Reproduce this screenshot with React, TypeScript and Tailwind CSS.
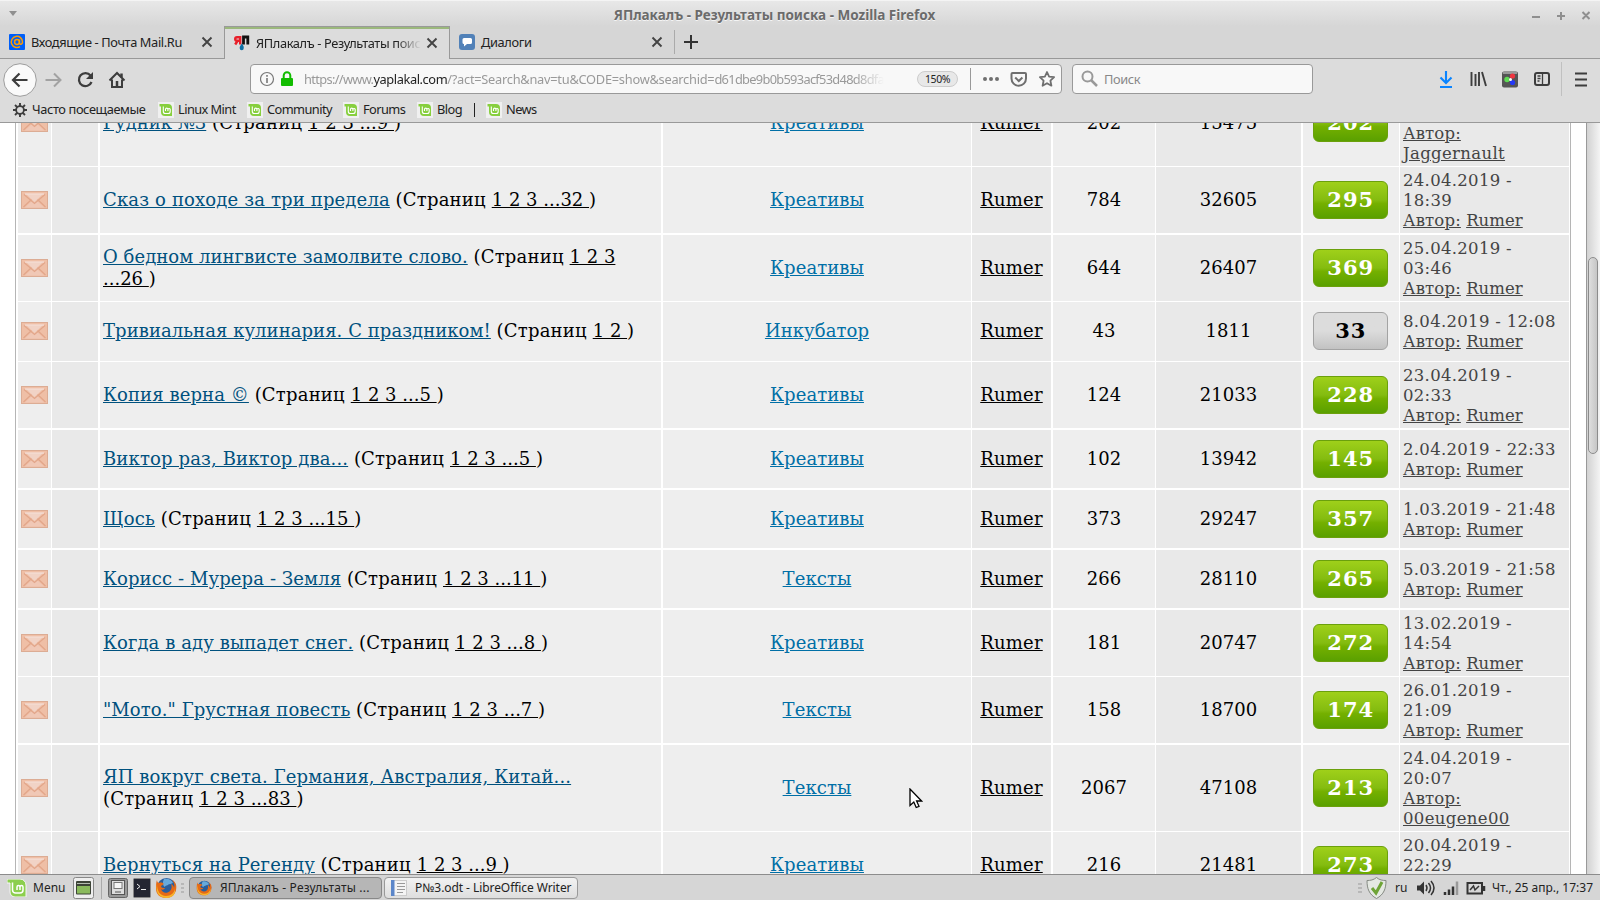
import { ReactNode } from 'react';
import { clsx } from 'clsx';

interface Topic {
  title: string;
  titleSpacing: string;
  pages: string;
  pagesTail?: string;
  breakBefore?: boolean;
  forum: string;
  replies: string;
  views: string;
  rating: string;
  date: string[];
  author: string;
  wrapAuthor?: boolean;
  size: string;
}

const topics: Topic[] = [
  { title: 'Рудник №3', titleSpacing: 'tracking-normal', pages: '1 2 3 ...9 ', forum: 'Креативы', replies: '202', views: '15475', rating: '202', date: ['25.04.2019 -', '10:12'], author: 'Jaggernault', wrapAuthor: true, size: 'h-[87px] border-b -mt-[43px]' },
  { title: 'Сказ о походе за три предела', titleSpacing: 'tracking-[0.15px]', pages: '1 2 3 ...32 ', forum: 'Креативы', replies: '784', views: '32605', rating: '295', date: ['24.04.2019 -', '18:39'], author: 'Rumer', size: 'h-[68px] border-b-2' },
  { title: 'О бедном лингвисте замолвите слово.', titleSpacing: 'tracking-[0.04px]', pages: '1 2 3', pagesTail: '...26 ', forum: 'Креативы', replies: '644', views: '26407', rating: '369', date: ['25.04.2019 -', '03:46'], author: 'Rumer', size: 'h-[67px] border-b' },
  { title: 'Тривиальная кулинария. С праздником!', titleSpacing: 'tracking-[0.06px]', pages: '1 2 ', forum: 'Инкубатор', replies: '43', views: '1811', rating: '33', date: ['8.04.2019 - 12:08'], author: 'Rumer', size: 'h-[60px] border-b *:pb-px' },
  { title: 'Копия верна ©', titleSpacing: 'tracking-[0.1px]', pages: '1 2 3 ...5 ', forum: 'Креативы', replies: '124', views: '21033', rating: '228', date: ['23.04.2019 -', '02:33'], author: 'Rumer', size: 'h-[68px] border-b-2' },
  { title: 'Виктор раз, Виктор два...', titleSpacing: 'tracking-[0.14px]', pages: '1 2 3 ...5 ', forum: 'Креативы', replies: '102', views: '13942', rating: '145', date: ['2.04.2019 - 22:33'], author: 'Rumer', size: 'h-[60px] border-b-2' },
  { title: 'Щось', titleSpacing: 'tracking-[0.2px]', pages: '1 2 3 ...15 ', forum: 'Креативы', replies: '373', views: '29247', rating: '357', date: ['1.03.2019 - 21:48'], author: 'Rumer', size: 'h-[60px] border-b-2' },
  { title: 'Корисс - Мурера - Земля', titleSpacing: 'tracking-[0.11px]', pages: '1 2 3 ...11 ', forum: 'Тексты', replies: '266', views: '28110', rating: '265', date: ['5.03.2019 - 21:58'], author: 'Rumer', size: 'h-[60px] border-b-2' },
  { title: 'Когда в аду выпадет снег.', titleSpacing: 'tracking-[0.08px]', pages: '1 2 3 ...8 ', forum: 'Креативы', replies: '181', views: '20747', rating: '272', date: ['13.02.2019 -', '14:54'], author: 'Rumer', size: 'h-[67px] border-b' },
  { title: '"Мото." Грустная повесть', titleSpacing: 'tracking-[0.08px]', pages: '1 2 3 ...7 ', forum: 'Тексты', replies: '158', views: '18700', rating: '174', date: ['26.01.2019 -', '21:09'], author: 'Rumer', size: 'h-[68px] border-b-2' },
  { title: 'ЯП вокруг света. Германия, Австралия, Китай...', titleSpacing: 'tracking-[0.13px]', pages: '1 2 3 ...83 ', breakBefore: true, forum: 'Тексты', replies: '2067', views: '47108', rating: '213', date: ['24.04.2019 -', '20:07'], author: '00eugene00', wrapAuthor: true, size: 'h-[87px] border-b' },
  { title: 'Вернуться на Регенду', titleSpacing: 'tracking-[0.1px]', pages: '1 2 3 ...9 ', forum: 'Креативы', replies: '216', views: '21481', rating: '273', date: ['20.04.2019 -', '22:29'], author: 'Rumer', size: 'h-[67px] border-b' },
];

function Envelope() {
  return (
    <svg width="27" height="18" viewBox="0 0 27 18" fill="none">
      <rect x="0.5" y="0.5" width="26" height="17" fill="#efbfa6" stroke="#dcac94" />
      <path d="M2.500 16 10.500 8.500M24.500 16 16.500 8.500" stroke="#e2a68a" strokeWidth="1.200" />
      <path d="M4 16.500 11 10l2.500 2.500L16 10l7 6.500z" fill="#f0c8b6" />
      <path d="M3 3.500 13.500 12.500 24 3.500" stroke="#e2a68a" strokeWidth="1.200" />
      <path d="M5 3h17l-8.500 8z" fill="#f1d3c6" />
      <path d="M4 3h19" stroke="#f4ded4" strokeWidth="1.300" />
    </svg>
  );
}

function CloseIcon() {
  return (
    <svg width="12" height="12" viewBox="0 0 12 12" stroke="#444" strokeWidth="1.9" className="shrink-0">
      <path d="M1.500 1.500l9 9M10.500 1.500l-9 9" />
    </svg>
  );
}

function MintIcon() {
  return (
    <svg width="16" height="16" viewBox="0 0 16 16" fill="none" className="shrink-0">
      <rect width="16" height="16" fill="#f0f0f0" />
      <path d="M1.500 2h8.500a4 4 0 0 1 4 4v8H7a4 4 0 0 1-4-4V4.500H1.500z" fill="#87cf3e" />
      <path d="M5.300 4.500v5a2 2 0 0 0 2 2h2.900a2 2 0 0 0 2-2V7.300a1.200 1.200 0 0 0-2.300 0V9M9.900 7.300a1.200 1.200 0 0 0-2.400 0V9" stroke="#fff" strokeWidth="1.100" />
    </svg>
  );
}

function FirefoxIcon({ size }: { size: number }) {
  return (
    <svg width={size} height={size} viewBox="0 0 22 22" className="shrink-0">
      <circle cx="11.500" cy="10.500" r="9.500" fill="#2a5d9c" />
      <path d="M9 2c4-1 8 1 9 4-2 0-2 2-4 1-1 2-4 1-4 3-2-1-3-4-1-8z" fill="#67a9dc" />
      <path d="M2 3c0 2 1 3 2 3 2-1 4 0 5 1-1 1-3 1-3 3 1 1 3 1 4 1-1 2-3 2-4 1 1 4 6 5 9 2 2-2 2-5 1-7 2 1 3 2 3 4 1-3 0-6-2-8 4 2 5 6 4 10-1 5-5 8-10 8C5 21 1 17 1 12c0-4 0-6 1-9z" fill="#e66a16" />
      <path d="M2 7c0 7 3 12 9 12 5 0 8-3 9-7 1 5-3 9-8.500 9C5 21 0 16 2 7z" fill="#f7b52b" />
    </svg>
  );
}

function TitleBar() {
  return (
    <div className="flex h-[26px] shrink-0 items-center border-t border-[#f4f4f4] bg-linear-to-b from-[#e8e8e8] to-[#d6d6d6] pl-[9px] pr-2.5">
      <svg width="8" height="5" viewBox="0 0 8 5"><path d="M0 0h8L4 5z" fill="#8f8f8f" /></svg>
      <div className="flex-1 pt-0.5 text-center text-[13.500px] leading-5 font-bold text-[#6b6b6b] [text-shadow:0_1px_0_#f4f4f4]">
        ЯПлакалъ - Результаты поиска - Mozilla Firefox
      </div>
      <svg width="58" height="10" viewBox="0 0 58 10" stroke="#8f8f8f" strokeWidth="2" className="mt-1">
        <path d="M0 6h8M25 5h8M29 1v8M50.500 1l7 7M57.500 1l-7 7" />
      </svg>
    </div>
  );
}

function TabBar() {
  return (
    <div className="flex h-[33px] shrink-0 bg-[#d6d6d6] text-[12.800px] tracking-[-0.370px] text-[#222]">
      <div className="flex w-[224px] items-center border-b border-[#999] pl-[9px] pr-[11px]">
        <svg width="16" height="16" viewBox="0 0 16 16" fill="none">
          <rect width="16" height="16" rx="1" fill="#005ff9" />
          <circle cx="8" cy="8" r="2.400" stroke="#ff9e00" strokeWidth="1.500" />
          <path d="M10.500 5.500V9c0 2 3 1.500 3-1A5.600 5.600 0 1 0 11 12.600" stroke="#ff9e00" strokeWidth="1.500" />
        </svg>
        <span className="ml-1.5 flex-1 pt-0.5 whitespace-nowrap">Входящие - Почта Mail.Ru</span>
        <CloseIcon />
      </div>
      <div className="flex w-[226px] items-center border-x border-t border-[#999] bg-[#dcdcdc] pr-[11px] pl-[9px] shadow-[inset_0_2px_0_#9bb87c]">
        <svg width="16" height="16" viewBox="0 0 16 16" fill="none" className="shrink-0">
          <path d="M6.200 9.500V2.200H3a1.700 1.700 0 0 0 0 3.600h3M3.500 6 1.200 9.500" stroke="#e8202a" strokeWidth="2.400" />
          <path d="M9.500 9.500V2h4.300v7.500" stroke="#111" strokeWidth="2.800" />
          <path d="M7.700 8.500c2 2.500 2.300 3.500 2 4.800a2 2 0 0 1-4 0c-.3-1.300.7-2.500 2-4.800z" fill="#0d6fa5" />
        </svg>
        <span className="ml-1.5 w-[165px] overflow-hidden pt-0.5 whitespace-nowrap [mask-image:linear-gradient(to_right,#000_140px,transparent)]">ЯПлакалъ - Результаты поиска</span>
        <span className="ml-auto flex"><CloseIcon /></span>
      </div>
      <div className="flex flex-1 items-center border-b border-[#999] pl-[9px]">
        <svg width="16" height="16" viewBox="0 0 16 16">
          <rect width="16" height="16" rx="3" fill="#5181b8" />
          <path d="M5 4h6.500A1.500 1.500 0 0 1 13 5.500v3a1.500 1.500 0 0 1-1.500 1.500H8l-3 2.500V10a1.500 1.500 0 0 1-1.500-1.500v-3A1.500 1.500 0 0 1 5 4z" fill="#fff" />
        </svg>
        <span className="ml-1.5 w-[170px] pt-0.5">Диалоги</span>
        <CloseIcon />
        <div className="ml-[11px] h-6 w-px bg-[#aaa]" />
        <svg width="14" height="14" viewBox="0 0 14 14" stroke="#333" strokeWidth="2" className="ml-[9px]">
          <path d="M7 0v14M0 7h14" />
        </svg>
      </div>
    </div>
  );
}

function NavBar() {
  return (
    <div className="flex h-[39px] shrink-0 items-center bg-[#dcdcdc]">
      <svg width="130" height="36" viewBox="0 0 130 36" fill="none" stroke="#3d3d3d" strokeWidth="2" className="mt-0.5">
        <circle cx="20" cy="18" r="16.300" fill="#fafafa" stroke="#9c9c9c" strokeWidth="1" />
        <path d="M27.500 18H13.500M19.500 11.500 13 18l6.500 6.500" strokeWidth="2.200" />
        <path d="M45.500 18H60M54 11.500l6.500 6.500-6.500 6.500" stroke="#a2a2a2" />
        <path d="M90.500 13.500a6.500 6.500 0 1 0 1 6.500" strokeWidth="2.300" />
        <path d="M93 10v7h-7z" fill="#3d3d3d" stroke="none" />
        <path d="M109.500 18.500 117 11l7.500 7.500M112 17.500V25h10v-7.500" />
        <path d="M121.500 11.500v4M117 19v6" strokeWidth="2.500" />
      </svg>
      <div className="ml-[120px] flex h-[30px] w-[812px] items-center rounded border border-[#999] bg-[#f8f8f8] pr-[5px] pl-[9px]">
        <svg width="34" height="16" viewBox="0 0 34 16" fill="none" className="shrink-0">
          <circle cx="7" cy="8" r="6.500" stroke="#777" strokeWidth="1.200" />
          <path d="M7 7v5M7 4v1.700" stroke="#777" strokeWidth="1.600" />
          <rect x="21" y="7" width="12" height="8" rx="1" fill="#12bc00" />
          <path d="M23.700 7V4.500a3.300 3.300 0 0 1 6.600 0V7" stroke="#12bc00" strokeWidth="2" />
        </svg>
        <div className="ml-2.5 w-[580px] overflow-hidden pt-0.5 text-[12.800px] tracking-[-0.250px] whitespace-nowrap text-[#999] [mask-image:linear-gradient(to_right,#000_550px,transparent)]">
          <span className="tracking-[-0.650px]">https://www.</span>
          <span className="tracking-[-0.400px] text-[#222]">yaplakal.com</span>
          /?act=Search&amp;nav=tu&amp;CODE=show&amp;searchid=
          <span className="tracking-[-0.680px]">d61dbe9b0b593acf53d48d8dfa</span>
        </div>
        <div className="ml-auto h-4 w-[41px] shrink-0 rounded-full border border-[#ccc] bg-[#e8e8e8] text-center text-[10.500px] leading-[15px] tracking-[-0.400px] text-[#222]">150%</div>
        <div className="ml-3 h-[22px] w-px bg-[#999]" />
        <svg width="74" height="18" viewBox="0 0 74 18" fill="none" stroke="#6f6f6f" strokeWidth="2" className="ml-[11px] shrink-0">
          <g fill="#6f6f6f" stroke="none"><circle cx="3" cy="9" r="2" /><circle cx="9" cy="9" r="2" /><circle cx="15" cy="9" r="2" /></g>
          <path d="M30.500 3H43q1 0 1 1v4.500a7.200 7.200 0 0 1-14.500 0V4q0-1 1-1z" />
          <path d="M33.200 7.500l3.600 3.500 3.600-3.500" />
          <path d="M65 2l2.100 4.600 5 .6-3.700 3.500 1 5-4.400-2.500-4.400 2.500 1-5-3.700-3.500 5-.6z" strokeWidth="1.800" strokeLinejoin="round" />
        </svg>
      </div>
      <div className="ml-2.5 flex h-[30px] w-[241px] items-center rounded border border-[#999] bg-[#f8f8f8] pl-2">
        <svg width="17" height="17" viewBox="0 0 17 17" fill="none" stroke="#999" strokeWidth="2">
          <circle cx="6.500" cy="6.500" r="5" />
          <path d="M10 10l6 6" strokeWidth="2.500" />
        </svg>
        <span className="ml-1.5 pt-0.5 text-[12.800px] tracking-[-0.400px] text-[#888]">Поиск</span>
      </div>
      <svg width="160" height="34" viewBox="0 0 160 34" fill="none" stroke="#3d3d3d" strokeWidth="2" className="mr-[7px] ml-auto">
        <path d="M13 9v12M7.500 15.500 13 21l5.500-5.500M7 25h12" stroke="#0a84ff" strokeWidth="2.100" />
        <path d="M38.500 10v14M42.500 12v12M46 10v14M49 10l4 14" strokeWidth="1.900" />
        <rect x="69" y="9.500" width="16" height="16" rx="2" fill="#555" stroke="none" />
        <path d="M70 11h14" stroke="#999" />
        <g stroke="none"><circle cx="79.500" cy="14" r="2.600" fill="#f03540" /><circle cx="74" cy="17.500" r="2.700" fill="#5fdc54" /><circle cx="79.500" cy="20.500" r="2.600" fill="#2438f5" /><circle cx="77.500" cy="17.500" r="1.500" fill="#fff" /></g>
        <rect x="102" y="11" width="14" height="12" rx="2" />
        <path d="M109.500 11v12M104.500 14h3M104.500 16.500h3M104.500 19h2" strokeWidth="1.300" />
        <path d="M128.500 0v34" stroke="#c0c0c0" strokeWidth="1" />
        <path d="M142 11.500h12M142 17.500h12M142 23.500h12" />
      </svg>
    </div>
  );
}

function Bookmark({ children, className }: { children: ReactNode; className: string }) {
  return (
    <div className={clsx('flex shrink-0 items-center gap-1 tracking-[-0.560px]', className)}>
      <MintIcon />
      <span className="whitespace-nowrap">{children}</span>
    </div>
  );
}

function BookmarksBar() {
  return (
    <div className="flex h-[25px] shrink-0 items-center border-b border-[#999] bg-[#dcdcdc] pb-px pl-[13px] text-[12.800px] text-[#222]">
      <svg width="14" height="14" viewBox="0 0 14 14" fill="none" stroke="#3d3d3d">
        <circle cx="7" cy="7" r="3.900" strokeWidth="1.800" />
        <path d="M7 0v3M7 11v3M0 7h3M11 7h3M2 2l2.200 2.200M9.800 9.800 12 12M12 2 9.800 4.200M4.200 9.800 2 12" strokeWidth="1.900" />
      </svg>
      <span className="ml-[5px] w-[126px] tracking-[-0.380px] whitespace-nowrap">Часто посещаемые</span>
      <Bookmark className="w-[89px]">Linux Mint</Bookmark>
      <Bookmark className="w-24">Community</Bookmark>
      <Bookmark className="w-[74px]">Forums</Bookmark>
      <Bookmark className="w-[57px]">Blog</Bookmark>
      <div className="mr-[11px] h-3.5 w-px bg-[#222]" />
      <Bookmark className="w-[60px]">News</Bookmark>
    </div>
  );
}

function TopicRow({ topic }: { topic: Topic }) {
  const cell = 'flex items-center border-white';
  const low = topic.rating === '33';
  return (
    <div className={clsx('grid shrink-0 grid-cols-[34px_48px_563px_309px_81px_103px_147px_97px_169px] border-white text-lg leading-[22px] text-black', topic.size)}>
      <div className={clsx(cell, 'justify-center border-r bg-[#eee]')}><Envelope /></div>
      <div className={clsx(cell, 'border-r-2 bg-[#e9e9e9]')} />
      <div className={clsx(cell, 'border-r-2 bg-[#eee] pl-[3px]')}>
        <div className="whitespace-pre">
          <a className={clsx('text-[#00517e] underline', topic.titleSpacing)}>{topic.title}</a>
          {topic.breakBefore ? <br /> : ' '}
          <span className="tracking-[0.200px]">(Страниц </span>
          <a className="underline">{topic.pages}</a>
          {topic.pagesTail && <><br /><a className="underline">{topic.pagesTail}</a></>})
        </div>
      </div>
      <div className={clsx(cell, 'justify-center border-r bg-[#eee]')}>
        <a className="tracking-[0.080px] text-[#006fa6] underline">{topic.forum}</a>
      </div>
      <div className={clsx(cell, 'justify-center border-r-2 bg-[#e9e9e9]')}>
        <a className="tracking-[0.200px] underline">Rumer</a>
      </div>
      <div className={clsx(cell, 'justify-center border-r bg-[#eee]')}>{topic.replies}</div>
      <div className={clsx(cell, 'justify-center border-r-2 bg-[#e9e9e9]')}>{topic.views}</div>
      <div className={clsx(cell, 'justify-center border-r bg-[#eee]')}>
        <div
          className={clsx(
            'mr-0.5 flex h-[38px] w-[75px] items-center justify-center rounded-md border pl-[1.500px] text-[21px] font-bold tracking-[1px]',
            low
              ? 'border-[#a3a3a3] bg-linear-to-b from-[#dcdcdc] from-50% to-[#c2c2c2] text-black'
              : 'border-[#6ba00c] bg-[linear-gradient(#9fd01a,#84bc10_50%,#74b000_60%,#5aa000)] text-white'
          )}
        >
          {topic.rating}
        </div>
      </div>
      <div className="flex items-center bg-[#e9e9e9] pl-[3px] text-[16.500px] leading-5 text-[#444]">
        <div className="pt-[1.500px] whitespace-nowrap">
          {topic.date.map((line) => <div key={line} className="tracking-[0.300px]">{line}</div>)}
          <a className="tracking-[0.150px] underline">Автор:</a>
          {topic.wrapAuthor ? <br /> : ' '}
          <a className={clsx('underline', topic.wrapAuthor ? 'tracking-[0.350px]' : 'tracking-[0.050px]')}>{topic.author}</a>
        </div>
      </div>
    </div>
  );
}

function Page() {
  return (
    <div className="flex h-[751px] shrink-0 overflow-hidden bg-white font-['DejaVu_Serif',serif]">
      <div className="ml-[15px] flex w-[1556px] flex-col border-x border-[#b5b5b5] pl-0.5">
        {topics.map((topic) => <TopicRow key={topic.title} topic={topic} />)}
      </div>
      <div className="ml-auto w-3.5 border-l border-[#999] bg-linear-to-r from-[#d2d2d2] to-[#f4f4f4] pt-[134px] pl-px">
        <div className="h-[197px] w-2.5 rounded-full border border-[#8c8c8c] bg-linear-to-r from-[#dedede] to-[#c6c6c6]" />
      </div>
    </div>
  );
}

function Taskbar() {
  return (
    <div className="flex h-[26px] shrink-0 items-center border-t border-[#8c8c8c] bg-[#d6d6d6] pl-[7px] text-[12px] text-[#222]">
      <svg width="20" height="18" viewBox="0 0 20 18" fill="none">
        <path d="M0 0h13a6 6 0 0 1 6 6v12H8a5 5 0 0 1-5-5V4H0z" fill="#8ccf4d" stroke="#f5f5f5" />
        <path d="M5.500 3.500V11a3 3 0 0 0 3 3H13a3 3 0 0 0 3-3V8a1.500 1.500 0 0 0-3 0v3M13 8a1.500 1.500 0 0 0-3 0v3" stroke="#fff" strokeWidth="1.500" />
      </svg>
      <span className="ml-1.5 w-10">Menu</span>
      <svg width="111" height="24" viewBox="0 0 111 24">
        <rect x="0.500" y="1.500" width="20" height="21" rx="2" fill="#eee" stroke="#888" />
        <rect x="3" y="5" width="15" height="13.500" rx="1" fill="#3d4437" />
        <path d="M4 7.500h13" stroke="#b5bdb0" />
        <rect x="4" y="10" width="13" height="7.500" fill="#8aba5c" />
        <path d="M28.500 1v22" stroke="#aaa" />
        <rect x="35.500" y="2.500" width="19" height="19" rx="2" fill="#999" stroke="#666" />
        <rect x="38.500" y="4.500" width="13" height="14" fill="#ddd" stroke="#555" />
        <rect x="41" y="6.500" width="8" height="6" fill="#f5f5f5" stroke="#777" />
        <path d="M42 16h6" stroke="#555" />
        <rect x="60.500" y="2.500" width="17" height="19" rx="1" fill="#242632" stroke="#888" />
        <path d="M64 8l3 2.500-3 2.500M68 13.500h5" stroke="#eee" fill="none" />
        <path d="M108 8h4M108 12h4M108 16h4" stroke="#999" />
        <g transform="translate(82 1)"><FirefoxIcon size={22} /></g>
      </svg>
      <div className="ml-[5px] flex h-[22px] w-[193px] items-center rounded border border-[#888] bg-[#b6b6b6] pl-1.5">
        <FirefoxIcon size={16} />
        <span className="ml-2 tracking-[0.180px] whitespace-nowrap">ЯПлакалъ - Результаты ...</span>
      </div>
      <div className="ml-0.5 flex h-[22px] w-[194px] items-center rounded border border-[#999] bg-linear-to-b from-[#f2f2f2] to-[#dedede] pl-1.5">
        <svg width="16" height="16" viewBox="0 0 16 16">
          <rect x="0.500" y="0.500" width="15" height="15" fill="#f4f4f4" stroke="#ccc" />
          <rect width="3.500" height="16" fill="#5b86c9" />
          <path d="M6 3.500h8M6 6.500h8M6 9.500h8M6 12.500h6" stroke="#999" />
        </svg>
        <span className="ml-2 tracking-[-0.070px] whitespace-nowrap">P№3.odt - LibreOffice Writer</span>
      </div>
      <div className="ml-auto flex items-center pr-[7px]">
        <svg width="30" height="24" viewBox="0 0 30 24" fill="none">
          <path d="M0 8h4M0 12h4M0 16h4" stroke="#999" />
          <path d="M18.500 1.500c3 2.500 6 3 9.500 3 0 8-2 14-9.500 18-7.500-4-9.500-10-9.500-18 3.500 0 6.500-.5 9.500-3z" fill="#e4e8e2" stroke="#858a83" />
          <path d="M14 12l4 5 6-11" stroke="#6ea436" strokeWidth="3" />
        </svg>
        <span className="ml-[7px] w-[21px]">ru</span>
        <svg width="70" height="18" viewBox="0 0 70 18" fill="none" stroke="#333">
          <path d="M1 6.500h3l4-4v13l-4-4H1z" fill="#333" stroke="none" />
          <path d="M10 6q2 3 0 6M12.500 4q4 5 0 10M15 2q6 7 0 14" strokeWidth="1.500" />
          <path d="M29 13v3M33 10.500V16M37 7.500V16" strokeWidth="2.500" />
          <path d="M41 2.500V16" stroke="#999" strokeWidth="2.500" />
          <rect x="51.500" y="4" width="14.500" height="10.500" strokeWidth="2" />
          <path d="M68 7v5" strokeWidth="2.500" />
          <path d="M54 11l3.500-4 1.500 4 4-4" strokeWidth="1.500" />
        </svg>
        <span className="ml-1.5 w-[101px] whitespace-nowrap">Чт., 25 апр., 17:37</span>
      </div>
    </div>
  );
}

export default function App() {
  return (
    <div className="relative flex h-[900px] w-[1600px] flex-col overflow-hidden font-['Noto_Sans',sans-serif]">
      <TitleBar />
      <TabBar />
      <NavBar />
      <BookmarksBar />
      <Page />
      <Taskbar />
      <svg width="14" height="21" viewBox="0 0 14 21" className="absolute top-[788px] left-[909px]">
        <path d="M1 1v16.500l3.800-3.500 2.400 5.500 2.800-1.200-2.400-5.300h5z" fill="#fff" stroke="#000" strokeWidth="1.300" />
      </svg>
    </div>
  );
}
